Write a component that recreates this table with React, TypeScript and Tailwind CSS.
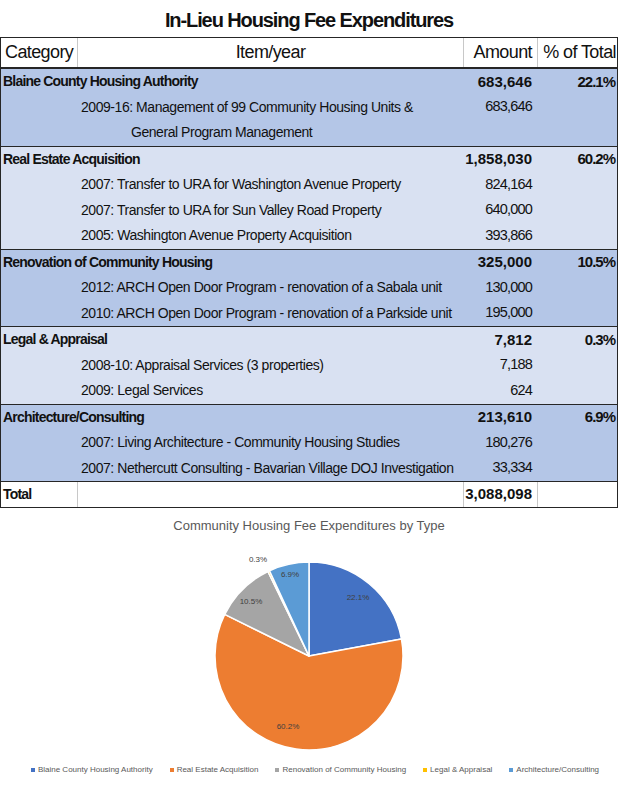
import React from 'react';

type Item = { label: string; amount: string; wrap?: boolean };
type Section = { name: string; amount: string; pct: string; bg: string; items: Item[] };

const sections: Section[] = [
  {
    name: 'Blaine County Housing Authority',
    amount: '683,646',
    pct: '22.1%',
    bg: 'bg-[#b4c6e7]',
    items: [
      { label: '2009-16: Management of 99 Community Housing Units &', amount: '683,646' },
      { label: 'General Program Management', amount: '', wrap: true },
    ],
  },
  {
    name: 'Real Estate Acquisition',
    amount: '1,858,030',
    pct: '60.2%',
    bg: 'bg-[#d9e1f2]',
    items: [
      { label: '2007: Transfer to URA for Washington Avenue Property', amount: '824,164' },
      { label: '2007: Transfer to URA for Sun Valley Road Property', amount: '640,000' },
      { label: '2005: Washington Avenue Property Acquisition', amount: '393,866' },
    ],
  },
  {
    name: 'Renovation of Community Housing',
    amount: '325,000',
    pct: '10.5%',
    bg: 'bg-[#b4c6e7]',
    items: [
      { label: '2012: ARCH Open Door Program - renovation of a Sabala unit', amount: '130,000' },
      { label: '2010: ARCH Open Door Program - renovation of a Parkside unit', amount: '195,000' },
    ],
  },
  {
    name: 'Legal & Appraisal',
    amount: '7,812',
    pct: '0.3%',
    bg: 'bg-[#d9e1f2]',
    items: [
      { label: '2008-10: Appraisal Services (3 properties)', amount: '7,188' },
      { label: '2009: Legal Services', amount: '624' },
    ],
  },
  {
    name: 'Architecture/Consulting',
    amount: '213,610',
    pct: '6.9%',
    bg: 'bg-[#b4c6e7]',
    items: [
      { label: '2007: Living Architecture - Community Housing Studies', amount: '180,276' },
      { label: '2007: Nethercutt Consulting - Bavarian Village DOJ Investigation', amount: '33,334' },
    ],
  },
];

const slices = [
  { name: 'Blaine County Housing Authority', pct: 22.1, color: '#4472c4' },
  { name: 'Real Estate Acquisition', pct: 60.2, color: '#ed7d31' },
  { name: 'Renovation of Community Housing', pct: 10.5, color: '#a5a5a5' },
  { name: 'Legal & Appraisal', pct: 0.3, color: '#ffc000' },
  { name: 'Architecture/Consulting', pct: 6.9, color: '#5b9bd5' },
];

const labels = [
  { text: '22.1%', x: 358, y: 64 },
  { text: '60.2%', x: 288, y: 193 },
  { text: '10.5%', x: 251, y: 68 },
  { text: '0.3%', x: 258, y: 26 },
  { text: '6.9%', x: 290, y: 41 },
];

const CX = 309;
const CY = 122;
const R = 94;

function point(deg: number) {
  const a = ((deg - 90) * Math.PI) / 180;
  return [CX + R * Math.cos(a), CY + R * Math.sin(a)];
}

function wedge(start: number, end: number) {
  const [x1, y1] = point(start);
  const [x2, y2] = point(end);
  const large = end - start > 180 ? 1 : 0;
  return `M${CX} ${CY} L${x1} ${y1} A${R} ${R} 0 ${large} 1 ${x2} ${y2} Z`;
}

const SubRow = ({ label, amount, indent }: { label: string; amount: string; indent: number }) => (
  <div className="flex h-[25.5px] items-center text-[14px]">
    <div className="flex-1 whitespace-nowrap tracking-[-0.45px]" style={{ paddingLeft: indent }}>{label}</div>
    <div className="w-[74px] pr-[5px] text-right text-[14.5px] tracking-[-0.8px]">{amount}</div>
    <div className="w-[80px]" />
  </div>
);

const HeadRow = ({ label, amount, pct }: { label: string; amount: string; pct: string }) => (
  <div className="flex h-[25.5px] items-center font-bold">
    <div className="flex-1 whitespace-nowrap pl-[2px] text-[14px] tracking-[-0.8px]">{label}</div>
    <div className="w-[74px] pr-[5px] text-right text-[15px]">{amount}</div>
    <div className="w-[80px] pr-[2px] text-right text-[15px] tracking-[-1px]">{pct}</div>
  </div>
);

const PieChart = () => {
  let acc = 0;
  return (
    <svg width={618} height={228} viewBox="0 0 618 228" className="block">
      {slices.map((s) => {
        const start = (acc / 100) * 360;
        acc += s.pct;
        const end = (acc / 100) * 360;
        return <path key={s.name} d={wedge(start, end)} fill={s.color} stroke="#fff" strokeWidth={1.5} strokeLinejoin="round" />;
      })}
      {labels.map((l) => (
        <text key={l.text} x={l.x} y={l.y} textAnchor="middle" dominantBaseline="middle" fontSize={8} fill="#404040" fontFamily="Liberation Sans, sans-serif">
          {l.text}
        </text>
      ))}
    </svg>
  );
};

export default function App() {
  return (
    <div className="w-[618px] h-[800px] bg-white text-[#111] font-['Liberation_Sans',sans-serif]">
      <h1 className="h-[37px] pt-[2px] text-center text-[20px] font-bold leading-[37px] tracking-[-1.1px]">In-Lieu Housing Fee Expenditures</h1>

      <div className="border-x border-[#262626]">
        <div className="flex h-[32px] items-center whitespace-nowrap border-t border-b-2 border-[#262626] text-[18px] tracking-[-0.6px]">
          <div className="flex h-full w-[77px] items-center border-r border-[#c8c8c8] pl-[4px]">Category</div>
          <div className="flex h-full flex-1 items-center justify-center border-r border-[#c8c8c8]">Item/year</div>
          <div className="flex h-full w-[74px] items-center justify-end border-r border-[#c8c8c8] pr-[5px]">Amount</div>
          <div className="flex h-full w-[79px] items-center justify-end pr-[1px]">% of Total</div>
        </div>

        {sections.map((s) => (
          <div key={s.name} className={`${s.bg} border-b border-[#262626]`}>
            <HeadRow label={s.name} amount={s.amount} pct={s.pct} />
            {s.items.map((it) => (
              <SubRow key={it.label} label={it.label} amount={it.amount} indent={it.wrap ? 130 : 80} />
            ))}
          </div>
        ))}

        <div className="flex h-[25.5px] items-center border-b border-[#262626] font-bold">
          <div className="flex h-full w-[77px] items-center border-r border-[#c8c8c8] pl-[2px] text-[14px] tracking-[-0.8px]">Total</div>
          <div className="h-full flex-1 border-r border-[#c8c8c8]" />
          <div className="flex h-full w-[74px] items-center justify-end border-r border-[#c8c8c8] pr-[5px] text-[15px]">3,088,098</div>
          <div className="w-[79px]" />
        </div>
      </div>

      <div className="pt-[10px]">
        <div className="text-center text-[13px] leading-[16px] text-[#595959]">Community Housing Fee Expenditures by Type</div>
        <PieChart />
        <div className="flex h-[16px] items-center justify-center gap-[17px] pl-[12px] text-[8px] text-[#595959]">
          {slices.map((s) => (
            <div key={s.name} className="flex items-center gap-[3px]">
              <span className="inline-block h-[4px] w-[4px]" style={{ backgroundColor: s.color }} />
              <span>{s.name}</span>
            </div>
          ))}
        </div>
      </div>
    </div>
  );
}
